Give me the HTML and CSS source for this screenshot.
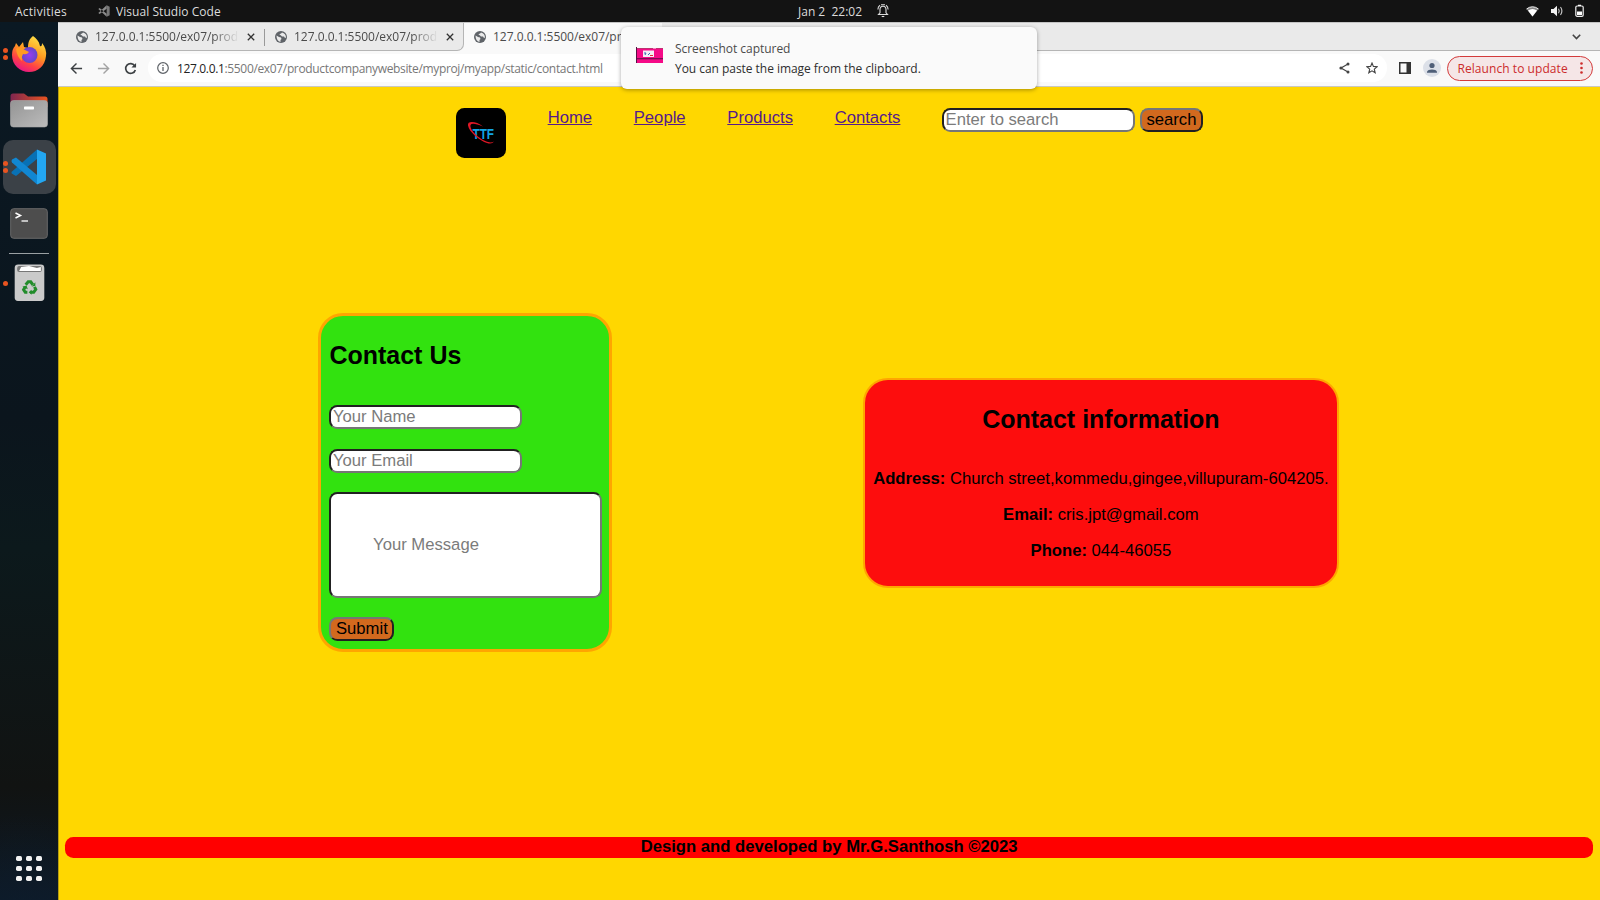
FILE: index.html
```html
<!DOCTYPE html>
<html lang="en">
<head>
<meta charset="utf-8">
<title>Contact</title>
<link rel="stylesheet" href="styles.css">
</head>
<body>
<svg class="defs" width="0" height="0">
  <symbol id="globe" viewBox="0 0 24 24"><circle cx="12" cy="12" r="12" fill="#5f6368"/><path d="M3 9l5 3 4 1 1 3-2 2v4c-5-1-8-6-8-13zM14 3c-1 3-5 2-5 4l3 2 2 2 4 0 2 3 2-1c0-5-3-9-8-10z" fill="#eaeaea"/></symbol>
  <symbol id="vs" viewBox="0 0 36 36"><path d="M26 .5 35 4.5V31.500L26 35.500Z" fill="#23a7f2"/><path d="M26 .5V10L5 27 .7 24.500Q0 23.500 1 22.500Z" fill="#0871b5"/><path d="M26 35.500V26L5 8.500 1 10.500Q0 12 1 13.500Z" fill="#1187d2"/></symbol>
</svg>
<header class="topbar">
  <span class="activities">Activities</span>
  <svg class="vs-mini" viewBox="0 0 36 36"><path d="M26 1 35 5V31L26 35Z" fill="#777"/><path d="M26 1V11L5 27 1 24ZM26 35V26L5 9 1 12Z" fill="#8b8b8b"/></svg>
  <span class="app-name">Visual Studio Code</span>
  <span class="clock">Jan 2&nbsp; 22:02</span>
  <svg class="bell" viewBox="0 0 12 14" fill="none" stroke="#ddd" stroke-width="1.100"><path d="M1.500 10.500H10.500L9 8.800V5.500C9 3.500 7.800 2.200 6 2.200S3 3.500 3 5.500V8.800ZM.9 5.500Q.9 2.500 3 1.200M11.100 5.500Q11.100 2.500 9 1.200M4 .8H8"/><path d="M4.700 12.500H7.300"/></svg>
  <div class="tray">
    <svg width="13" height="11" viewBox="0 0 13 11"><path d="M.5 3Q6.500-1.500 12.500 3L6.500 10.500Z" fill="#888"/><path d="M2 4.500Q6.500 1.500 11 4.500L6.500 10.500Z" fill="#fff"/><path d="M.5 3Q6.500-1.500 12.500 3" fill="none" stroke="#eee"/></svg>
    <svg width="14" height="12" viewBox="0 0 14 12"><path d="M1 4H3.500L7 .8V11.200L3.500 8H1Z" fill="#f2f2f2"/><path d="M8.500 3.800Q10 6 8.500 8.200M10.500 2Q13.300 6 10.500 10" fill="none" stroke="#ccc" stroke-width="1.100"/></svg>
    <svg class="battery" width="9" height="13" viewBox="0 0 9 13"><rect x=".8" y="2" width="7.400" height="10.300" rx="1.300" fill="none" stroke="#eee" stroke-width="1.200"/><path d="M3 .7H6V2H3ZM2 7.500H7V11H2Z" fill="#fff"/></svg>
  </div>
</header>
<div class="desktop">
  <aside class="dock">
    <div class="item"><i class="dot two"></i>
      <svg width="36" height="38" viewBox="0 0 36 38"><defs><linearGradient id="ff" x1=".8" y1="0" x2=".3" y2="1"><stop offset="0" stop-color="#ffe84a"/><stop offset=".45" stop-color="#ff9a20"/><stop offset=".75" stop-color="#ff4046"/><stop offset="1" stop-color="#e7148b"/></linearGradient><radialGradient id="fp"><stop offset="0" stop-color="#9a3df0"/><stop offset="1" stop-color="#6547c9"/></radialGradient></defs>
      <path d="M22 1C25 3 28 6 29 11Q31 12 31 8Q36 14 35 21C34 31 27 37 18 37S1 30 1 20Q1 14 4 11L5 8 8 12 12 7 13 12 17 13C17 8 18 4 22 1Z" fill="url(#ff)"/><circle cx="18.500" cy="20" r="8" fill="url(#fp)"/><path d="M5 14Q8 11 14 15L18 17Q16 20 12 19 10 22 11 26 6 22 5 14Z" fill="#ff9b22"/></svg></div>
    <div class="item">
      <svg width="38" height="35" viewBox="0 0 38 35"><defs><linearGradient id="fo"><stop offset="0" stop-color="#80264f"/><stop offset="1" stop-color="#e95420"/></linearGradient><linearGradient id="gr" x2="1" y2="1"><stop offset="0" stop-color="#949494"/><stop offset="1" stop-color="#bcbcbc"/></linearGradient></defs><path d="M.5 12V3Q.5.5 3 .5H14L18 3.500H35Q37.500 3.500 37.500 6V14H.5Z" fill="url(#fo)"/><rect x=".5" y="7.500" width="37" height="26.500" rx="3" fill="url(#gr)" stroke="#aaa" stroke-width=".6"/><rect x="14" y="13.500" width="10" height="3" rx=".7" fill="#fff"/></svg></div>
    <div class="item active"><i class="dot two"></i><svg width="36" height="36"><use href="#vs"/></svg></div>
    <div class="item"><svg width="38" height="31" viewBox="0 0 38 31"><rect x=".7" y=".7" width="36.600" height="29.600" rx="3" fill="#4d4d4d" stroke="#686868" stroke-width="1"/><path d="M5.500 5 10.500 7.500 5.500 10" fill="none" stroke="#fff" stroke-width="1.500"/><path d="M11.500 13H18" stroke="#fff" stroke-width="1.300"/></svg></div>
    <hr class="dock-line">
    <div class="item trash"><i class="dot"></i><svg width="31" height="38" viewBox="0 0 31 38"><rect x=".5" y=".5" width="30" height="37" rx="3.500" fill="#cacaca"/><rect x="3" y="2" width="25" height="6" rx="2" fill="#777"/><path d="M5 7 7 3 15 2 23 4 27 3V7Z" fill="#fff"/><g transform="translate(2.300 3.600) scale(.85)"><g fill="none" stroke="#218c2a" stroke-width="3.600"><path d="M11 20.500 14 17H17L19.500 20.500"/><path d="M21.500 23 23 26 20.500 29.500H16.500"/><path d="M13 29.500H10.500L8.500 26.500 10.500 23"/></g><path d="M18 22.500 22.500 22V17.500ZM18 26.500V32.500L14.500 29.500ZM7 23 12 21.500 13.500 26Z" fill="#218c2a"/></g></svg></div>
    <div class="apps"><b></b><b></b><b></b><b></b><b></b><b></b><b></b><b></b><b></b></div>
  </aside>
  <section class="browser">
    <div class="tabs">
      <div class="tab"><svg class="fav"><use href="#globe"/></svg><span class="tab-title">127.0.0.1:5500/ex07/prod</span><svg class="close" viewBox="0 0 8 8"><path d="M.8.800 7.200 7.200M7.200.8.800 7.200"/></svg></div>
      <div class="tab second"><svg class="fav"><use href="#globe"/></svg><span class="tab-title">127.0.0.1:5500/ex07/prod</span><svg class="close" viewBox="0 0 8 8"><path d="M.8.800 7.200 7.200M7.200.8.800 7.200"/></svg></div>
      <div class="tab current"><svg class="fav"><use href="#globe"/></svg><span class="tab-title">127.0.0.1:5500/ex07/prod</span></div>
      <div class="tab-rest"><svg width="9" height="6" viewBox="0 0 9 6"><path d="M.8.800 4.500 4.500 8.200.8" fill="none" stroke="#444" stroke-width="1.600"/></svg></div>
    </div>
    <div class="toolbar">
      <svg class="nav-ic" viewBox="0 0 14 14"><path d="M13 7H2M7 1.500 1.500 7 7 12.500" stroke="#3c4043"/></svg>
      <svg class="nav-ic" viewBox="0 0 14 14"><path d="M1 7H12M7 1.500 12.500 7 7 12.500" stroke="#a3a3a3"/></svg>
      <svg class="nav-ic" viewBox="0 0 14 14"><path d="M11.500 4A5.300 5.300 0 1 0 12.200 8.500" stroke="#3c4043" stroke-width="1.800"/><path d="M13 1V6H8Z" fill="#3c4043"/></svg>
      <div class="omnibox">
        <svg width="12" height="12" viewBox="0 0 12 12"><circle cx="6" cy="6" r="5.300" fill="none" stroke="#5f6368" stroke-width="1.200"/><path d="M6 5V9M6 2.800V4" stroke="#5f6368" stroke-width="1.300"/></svg>
        <span class="url"><em>127.0.0.1</em>:5500/ex07/productcompanywebsite/myproj/myapp/static/contact.html</span>
        <svg class="share" width="11" height="12" viewBox="0 0 11 12"><path d="M9 2 2 6 9 10" fill="none" stroke="#444" stroke-width="1.200"/><circle cx="9" cy="2" r="1.500" fill="#444"/><circle cx="2" cy="6" r="1.600" fill="#444"/><circle cx="9" cy="10" r="1.500" fill="#444"/></svg>
        <svg width="12" height="12" viewBox="0 0 12 12"><path d="M6 1 7.400 4.400 11.200 4.700 8.300 7.200 9.200 10.800 6 8.900 2.800 10.800 3.700 7.200.8 4.700 4.600 4.400Z" fill="none" stroke="#444" stroke-width="1.100"/></svg>
      </div>
      <svg class="panel" viewBox="0 0 12 12"><path d="M0 0H12V12H0ZM1.500 1.500V10.500H7.500V1.500Z" fill="#333" fill-rule="evenodd"/></svg>
      <svg class="avatar" viewBox="0 0 18 18"><circle cx="9" cy="9" r="9" fill="#dce0e8"/><circle cx="9" cy="6.500" r="2.600" fill="#4f5f78"/><path d="M4 13.800V12.500Q5 10.400 9 10.400T14 12.500V13.800Z" fill="#4f5f78"/></svg>
      <div class="relaunch"><span>Relaunch to update</span><svg width="3" height="12" viewBox="0 0 3 12" fill="#cc2b2b"><circle cx="1.500" cy="1.500" r="1.300"/><circle cx="1.500" cy="6" r="1.300"/><circle cx="1.500" cy="10.500" r="1.300"/></svg></div>
    </div>
    <div class="page">
      <nav class="nav">
        <svg class="logo" viewBox="0 0 50 50"><rect width="50" height="50" rx="8.300"/><text x="16.500" y="30.700" textLength="21.500" lengthAdjust="spacingAndGlyphs">TTF</text><path d="M27 18.500C20 13 11 12.500 12 17.500C13 24 24 33 31 35Q36 36.500 38 33.500Q34 36 27 32C20 28 13.500 21 14.500 17Q16 14 27 18.500Z" fill="#e01725"/></svg>
        <a href="#">Home</a><a href="#">People</a><a href="#">Products</a><a href="#">Contacts</a>
        <div class="search"><input class="field" placeholder="Enter to search"><button class="btn find">search</button></div>
      </nav>
      <main class="cards">
        <form class="card form">
          <h2>Contact Us</h2>
          <input class="field" placeholder="Your Name">
          <input class="field" placeholder="Your Email">
          <input class="field message" placeholder="Your Message">
          <button class="btn" type="button">Submit</button>
        </form>
        <section class="card info">
          <h2>Contact information</h2>
          <p><b>Address:</b> Church street,kommedu,gingee,villupuram-604205.</p>
          <p><b>Email:</b> cris.jpt@gmail.com</p>
          <p><b>Phone:</b> 044-46055</p>
        </section>
      </main>
      <footer class="footer">Design and developed by Mr.G.Santhosh ©2023</footer>
    </div>
  </section>
</div>
<div class="toast">
  <svg width="27" height="16" viewBox="0 0 27 16"><path d="M0 1.500H27V16H0Z" fill="#f50a87"/><path d="M0 0H1V16H0ZM0 11.300H27V12.200H0Z" fill="#541043"/><path d="M1 1.500H17M20 1.500H27" stroke="#a3104f" stroke-width=".7"/><path d="M7 3.500H18V10H7Z" fill="#f2eef5"/><path d="M8 6H10L9 8M12 8 14 6" stroke="#356ab0" fill="none"/><path d="M14 8.500H17" stroke="#d33"/></svg>
  <div><div class="toast-title">Screenshot captured</div><div class="toast-body">You can paste the image from the clipboard.</div></div>
</div>
</body>
</html>
```
FILE: styles.css
```css
* { box-sizing: border-box; }
html, body { margin: 0; width: 1600px; height: 900px; overflow: hidden; }
body { font-family: "Open Sans", "Noto Sans", sans-serif; font-size: 12px; position: relative; display: flex; flex-direction: column; }
svg { display: block; flex: none; }
.defs { position: absolute; }
span { white-space: nowrap; }

.topbar { height: 22px; background: #131313; color: #dcdcdc; display: flex; align-items: center; padding: 0 11px 0 15px; flex: none; }
.topbar span { line-height: 22px; padding-top: 1px; }
.activities { width: 83px; letter-spacing: .25px; }
.vs-mini { width: 12px; height: 12px; }
.app-name { margin-left: 6px; width: 682px; letter-spacing: .05px; }
.clock { width: 79px; }
.bell { width: 12px; height: 14px; }
.tray { margin-left: auto; display: flex; align-items: center; gap: 11px; padding-right: 5px; }
.battery { margin-bottom: 1px; }

.desktop { display: flex; flex: 1; min-height: 0; }
.dock { width: 58px; background: radial-gradient(circle at 40% 105%, #0d1d2e 0, transparent 130px), linear-gradient(#0b1923, #0b151d 45%, #0c191c 60%, #111312 87%, #0d1823); display: flex; flex-direction: column; align-items: center; padding-top: 5px; flex: none; }
.item { width: 53.500px; height: 53.500px; margin-bottom: 3.200px; display: flex; align-items: center; justify-content: center; position: relative; left: .3px; flex: none; border-radius: 10px; }
.item.active { background: #3b4147; }
.dot { position: absolute; left: 0; top: 25px; width: 5px; height: 5px; border-radius: 50%; background: #e95420; }
.dot.two { top: 21px; box-shadow: 0 7px #e95420; }
.dock-line { width: 40px; height: 1px; border: 0; background: #9aa0a3; margin: -1px 0 2px; }
.trash { margin-top: 1px; }
.trash svg { width: 31px; height: 37.500px; margin-bottom: 2px; }
.trash .dot { top: 24px; }
.apps { margin-top: auto; margin-bottom: 19px; display: grid; grid-template-columns: repeat(3, 5.500px); gap: 4.500px; }
.apps b { height: 5.500px; border-radius: 1.700px; background: #f2f2f2; }

.browser { flex: 1; min-width: 0; display: flex; flex-direction: column; }
.tabs { height: 29px; display: flex; background: #f9f9f9; border-top: 1px solid #c4c4c4; flex: none; }
.tab { width: 206px; padding: 0 9px 0 18px; display: flex; align-items: center; background: #eaeaea; border-bottom: 1px solid #b5b5b5; color: #4b4b4b; position: relative; flex: none; }
.tab.second { width: 200px; padding-left: 11px; border-bottom-right-radius: 7px; border-right: 1px solid #b5b5b5; }
.tab.second::before { content: ""; position: absolute; left: 0; top: 6px; width: 1px; height: 17px; background: #999; }
.tab.current { width: 198px; padding-left: 10px; background: #f9f9f9; border-bottom: 0; padding-bottom: 1px; }
.fav { width: 12px; height: 12px; }
.tab-title { margin-left: 7px; width: 145px; overflow: hidden; letter-spacing: -.02px; -webkit-mask: linear-gradient(90deg, #000 82%, transparent); mask: linear-gradient(90deg, #000 82%, transparent); }
.current .tab-title { mask: none; -webkit-mask: none; }
.close { width: 8px; height: 8px; margin-left: 8.500px; stroke: #333; stroke-width: 1.300; }
.tab-rest { flex: 1; background: #eaeaea; border-bottom: 1px solid #b5b5b5; display: flex; align-items: center; justify-content: flex-end; padding-right: 19px; }
.toolbar { height: 36px; flex: none; background: #f9f9f9; border-bottom: 1px solid #c9c8c0; display: flex; align-items: center; padding: 0 7px 1px 12px; }
.nav-ic { width: 13px; height: 13px; margin-right: 14px; fill: none; stroke-width: 1.500; }
.omnibox { margin-left: -3px; width: 1239px; height: 28px; background: #fff; border-radius: 14px; display: flex; align-items: center; padding: 0 9px; }
.url { margin-left: 8px; color: #777; letter-spacing: -.345px; }
.url em { font-style: normal; color: #222; }
.share { margin-left: auto; margin-right: 16px; }
.panel { width: 12px; height: 12px; margin-left: 12px; }
.avatar { width: 18px; height: 18px; margin-left: 11.500px; }
.relaunch { margin-left: auto; width: 146.500px; height: 25px; border: 1px solid #d33b3b; border-radius: 13px; background: #f5e6e7; color: #cc2b2b; display: flex; align-items: center; justify-content: space-between; padding: 0 9px 0 10px; letter-spacing: .06px; }

.page { flex: 1; background: gold; border-left: 1px solid #b79d12; font-family: "Liberation Sans", Arial, sans-serif; font-size: 16.667px; padding: 20.900px 6.700px 0 6px; color: #000; }
.nav { display: flex; gap: 41.667px; height: 50px; padding-left: 391px; align-items: flex-start; }
.nav a { color: #551a8b; text-decoration: underline; line-height: 19.200px; }
.logo { width: 50px; height: 50px; }
.logo text { font-family: "Liberation Sans", Arial, sans-serif; font-weight: bold; font-size: 14px; fill: #12a4e4; }
.search { display: flex; gap: 5px; }
.field { display: block; width: 192.600px; height: 24px; padding: 0 1.500px; border: 2px inset #767676; border-radius: 8.300px; background: #fff; font: 16.667px "Liberation Sans", Arial, sans-serif; outline: 0; }
.field::placeholder { color: #7b7b7b; }
.btn { display: block; height: 24px; width: 65px; padding: 0; border: 2px outset #767676; border-radius: 8.300px; background: chocolate; font: 16.667px "Liberation Sans", Arial, sans-serif; color: #000; white-space: nowrap; }
.find { width: 63.500px; }
.cards { display: flex; align-items: center; padding-left: 253.400px; margin-top: 155.200px; height: 339px; gap: 250.500px; }
.card { border: 3px solid orange; border-radius: 25px; padding: 0 8px; }
.card h2 { font-size: 25px; line-height: 28.700px; margin: 25px 0 35.600px; }
.form { width: 294px; height: 339px; background: #32e20f; display: flex; flex-direction: column; align-items: flex-start; }
.form .field { margin-bottom: 19.400px; flex: none; }
.form .message { width: 272.500px; height: 105.500px; padding: 0 41.667px; }
.info { width: 476px; height: 210px; border-width: 2px; background: #fd0d0d; text-align: center; white-space: nowrap; }
.info h2 { margin-bottom: 35.600px; margin-top: 25px; }
.info p { margin: 0 -5px 16.800px; line-height: 19.200px; }
.footer { margin-top: 185.200px; height: 21px; line-height: 19.600px; border-radius: 8.300px; background: red; text-align: center; font-weight: bold; }

.toast { position: absolute; left: 621px; top: 27px; width: 416px; height: 62px; border-radius: 6px; background: #fafafa; box-shadow: 0 1px 4px rgba(0,0,0,.35); display: flex; padding: 0 15px; color: #2e2e2e; letter-spacing: -.04px; }
.toast svg { margin: 20px 12px 0 0; }
.toast-title { margin-top: 12px; line-height: 20px; color: #4b4b4b; }
.toast-body { line-height: 20px; white-space: nowrap; }
```
